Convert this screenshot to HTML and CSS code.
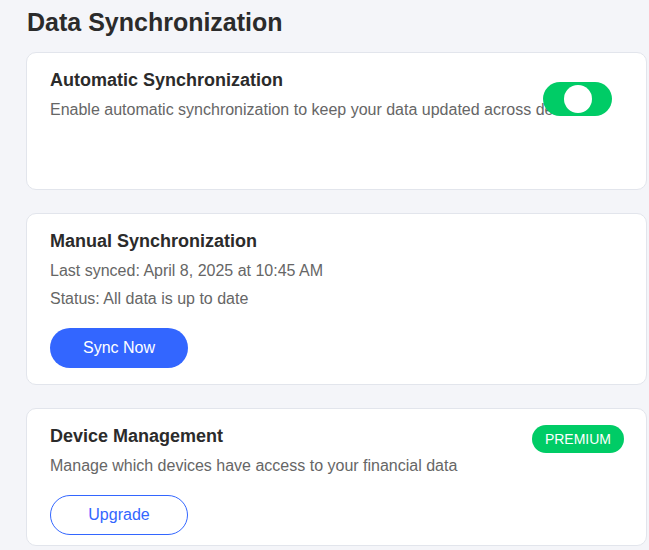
FILE: index.html
```html
<!DOCTYPE html>
<html lang="en">
<head>
<meta charset="utf-8">
<title>Data Synchronization</title>
<link rel="stylesheet" href="styles.css">
</head>
<body>
<main class="page">
  <h1 class="page-title">Data Synchronization</h1>

  <section class="card card--auto">
    <h3 class="card-title">Automatic Synchronization</h3>
    <p class="card-text card-text--nowrap">Enable automatic synchronization to keep your data updated across devices</p>
    <span class="toggle" role="switch" aria-checked="true"><span class="toggle-knob"></span></span>
  </section>

  <section class="card">
    <h3 class="card-title">Manual Synchronization</h3>
    <p class="card-text">Last synced: April 8, 2025 at 10:45 AM</p>
    <p class="card-text">Status: All data is up to date</p>
    <button class="btn btn--primary">Sync Now</button>
  </section>

  <section class="card card--last">
    <h3 class="card-title">Device Management</h3>
    <p class="card-text">Manage which devices have access to your financial data</p>
    <button class="btn btn--outline">Upgrade</button>
    <span class="badge">PREMIUM</span>
  </section>
</main>
</body>
</html>
```

FILE: styles.css
```css
* { box-sizing: border-box; }

html, body {
  margin: 0;
  background: #f4f5f9;
  font-family: "Liberation Sans", Arial, sans-serif;
  color: #333;
  overflow: hidden;
}

.page {
  padding: 8px 2px 0 26px;
  display: flex;
  flex-direction: column;
  gap: 23px;
}

.page-title {
  margin: 0 0 -7px 1px;
  font-size: 25px;
  line-height: 28px;
  font-weight: 700;
  color: #2b2b2b;
}

.card {
  position: relative;
  background: #fff;
  border: 1px solid #e2e5ec;
  border-radius: 10px;
  padding: 17px 23px 16px 23px;
  display: flex;
  flex-direction: column;
  align-items: flex-start;
  overflow: hidden;
}

.card--auto { min-height: 138px; }
.card--last { padding-bottom: 10px; }

.card-title {
  margin: 0 0 7px;
  font-size: 18px;
  line-height: 21px;
  font-weight: 700;
  color: #2b2b2b;
}

.card-text {
  margin: 0 0 4px;
  font-size: 16px;
  line-height: 24px;
  color: #666;
}

.card-text--nowrap { white-space: nowrap; }

.btn {
  margin-top: 13px;
  width: 138px;
  height: 40px;
  border-radius: 20px;
  font-family: inherit;
  font-size: 16px;
  cursor: pointer;
}

.btn--primary {
  background: #3366ff;
  border: none;
  color: #fff;
}

.btn--outline {
  background: #fff;
  border: 1px solid #3366ff;
  color: #3366ff;
}

.toggle {
  position: absolute;
  top: 29px;
  right: 34px;
  width: 69px;
  height: 34px;
  border-radius: 17px;
  background: #00cc66;
  display: flex;
  align-items: center;
  justify-content: center;
}

.toggle-knob {
  width: 28px;
  height: 28px;
  border-radius: 50%;
  background: #fff;
}

.badge {
  position: absolute;
  top: 16px;
  right: 22px;
  height: 28px;
  padding: 0 13px;
  border-radius: 14px;
  background: #00cc66;
  color: #fff;
  font-size: 14px;
  line-height: 28px;
}
```
